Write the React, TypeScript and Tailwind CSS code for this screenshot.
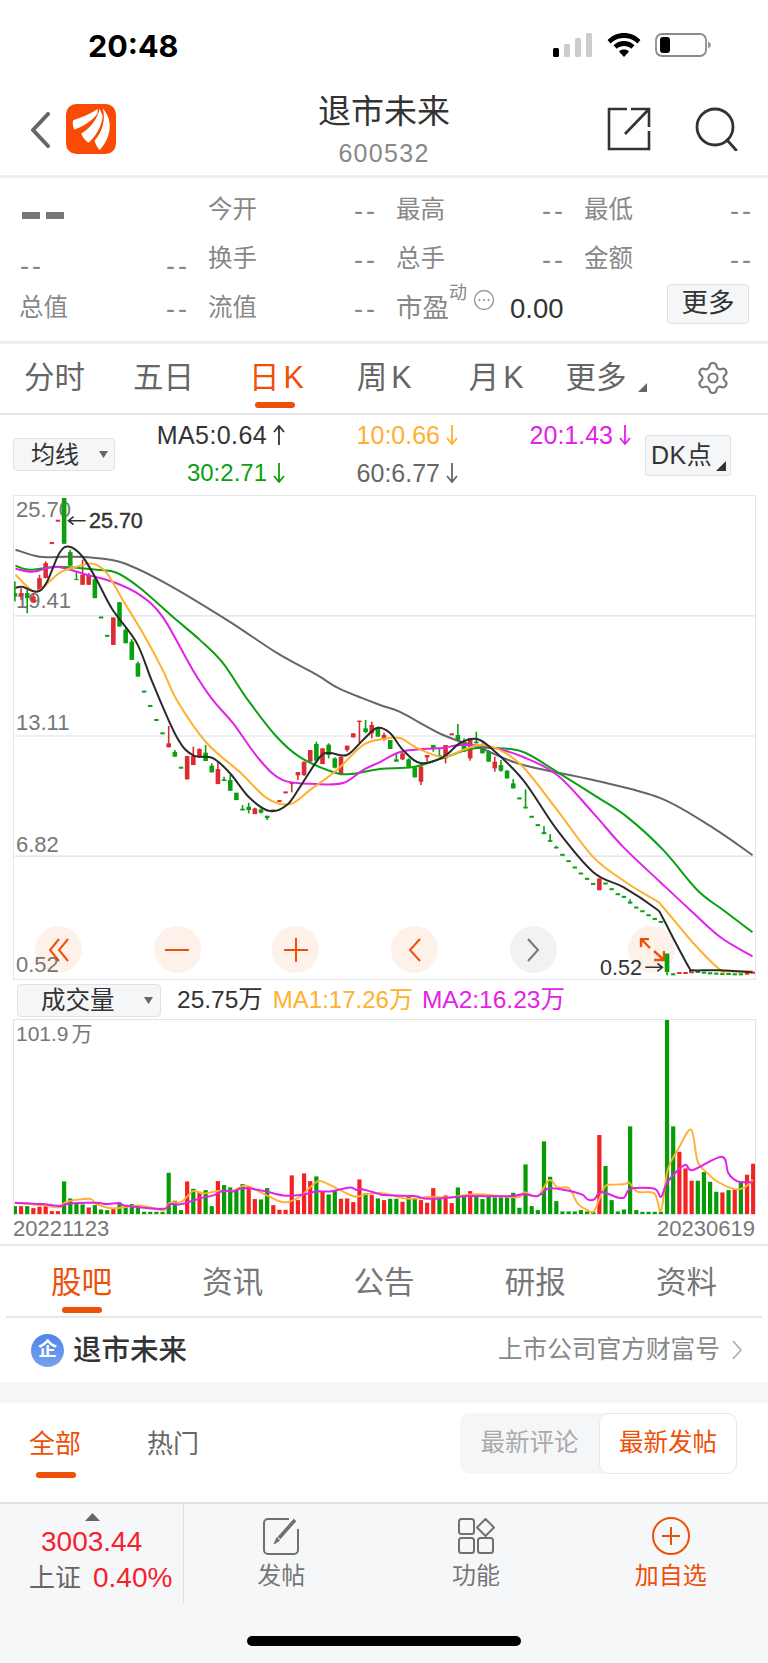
import React from "react";
import { Settings } from "lucide-react";

type P = [number, number];

function smooth(pts: P[]): string {
  let d = `M${pts[0][0]} ${pts[0][1]}`;
  for (let i = 0; i < pts.length - 1; i++) {
    const p0 = pts[i - 1] || pts[i];
    const p1 = pts[i];
    const p2 = pts[i + 1];
    const p3 = pts[i + 2] || p2;
    const c1x = p1[0] + (p2[0] - p0[0]) / 6;
    const c1y = p1[1] + (p2[1] - p0[1]) / 6;
    const c2x = p2[0] - (p3[0] - p1[0]) / 6;
    const c2y = p2[1] - (p3[1] - p1[1]) / 6;
    d += ` C${c1x.toFixed(1)} ${c1y.toFixed(1)} ${c2x.toFixed(1)} ${c2y.toFixed(1)} ${p2[0]} ${p2[1]}`;
  }
  return d;
}

const GREEN = "#0aa00f";
const RED = "#dc2c33";
const ORANGE = "#ffb02e";
const MAGENTA = "#e222e8";

const ma60: P[] = [[16,550],[40,557],[67,557],[93,558],[123,563],[167,584],[227,620],[277,653],[317,675],[340,689],[380,705],[400,712],[443,735],[480,748],[523,765],[593,780],[660,798],[713,828],[752,855]];
const ma30: P[] = [[16,566],[30,570],[60,567],[97,570],[117,573],[140,588],[173,617],[200,640],[223,663],[248,700],[277,737],[300,757],[333,772],[350,774],[380,769],[413,767],[443,758],[470,749],[493,748],[523,752],[557,772],[597,797],[627,817],[663,850],[697,890],[723,910],[752,932]];
const ma20: P[] = [[16,569],[33,572],[57,567],[87,575],[113,582],[140,595],[163,617],[193,670],[213,700],[233,723],[260,760],[283,780],[317,784],[343,783],[363,770],[380,762],[400,752],[423,749],[443,748],[460,745],[490,747],[523,757],[557,775],[593,813],[623,847],[660,882],[690,910],[720,937],[752,956]];
const ma10: P[] = [[16,575],[33,591],[43,588],[60,573],[77,567],[93,564],[107,573],[123,600],[143,633],[163,670],[177,700],[207,743],[240,772],[267,798],[290,804],[310,790],[337,770],[363,745],[383,739],[400,738],[417,748],[443,757],[463,750],[480,745],[500,750],[523,767],[557,810],[593,857],[627,883],[655,900],[662,906],[693,943],[720,970],[726,971],[752,971]];
const ma5: P[] = [[16,588],[23,587],[37,592],[47,583],[60,553],[70,547],[83,557],[97,580],[113,610],[137,643],[153,683],[177,737],[193,755],[213,758],[230,773],[250,798],[270,811],[287,805],[300,787],[320,757],[330,753],[347,755],[363,740],[377,728],[390,733],[403,750],[420,763],[443,757],[460,743],[477,739],[493,750],[523,780],[557,830],[593,872],[623,887],[655,908],[661,915],[675,942],[689,968],[692,970],[720,970],[752,972]];

// [index, colour, wick top, wick bottom, body top, body bottom] in zoom units
type C = [number, "g" | "r", number, number, number?, number?];
const candlesA: C[] = [
  [0,"g",485,545,520,530],[1,"r",505,540,520,530],[2,"g",510,580,520,535],[3,"r",520,548,530,548],[4,"r",465,510,475,510],[5,"r",425,475,430,475],
  [6,"r",370,370],[7,"r",303,303],[8,"g",235,372,235,372],[9,"g",390,438,397,438],[10,"g",455,480,478,481],[11,"r",420,495,465,495],[12,"r",460,495,465,495],
  [13,"g",470,535,478,535],[14,"g",593,593],[15,"g",648,648],[16,"r",593,675,593,675],[17,"g",547,620,547,620],[18,"g",625,670,630,670],[19,"g",658,720,665,720],
  [20,"g",725,770,730,770],[21,"g",815,815],
];
const candlesB: C[] = [
  [22,"g",18,18],[23,"g",60,60],[24,"g",100,100],[25,"r",78,142,130,142],[26,"g",150,170,156,170],[27,"g",203,203],[28,"r",168,238,168,238],[29,"r",140,195,168,195],
  [30,"r",145,172,147,172],[31,"g",135,183,158,183],[32,"g",190,217,197,217],[33,"r",185,252,207,252],[34,"g",230,243,238,243],[35,"g",225,272,240,272],[36,"g",278,300,278,300],
  [37,"g",315,330,326,331],[38,"g",308,340,320,330],[39,"r",323,342,325,342],[40,"g",325,340,328,338],[41,"g",347,360,347,354],[42,"r",331,331],[43,"r",303,303],[44,"r",277,277],
  [45,"r",248,277,248,252],[46,"r",216,240,216,226],[47,"r",185,228,185,225],[48,"r",150,185,150,185],[49,"g",125,185,132,182],[50,"r",145,192,145,192],[51,"g",130,175,134,165],
  [52,"g",172,205,175,203],[53,"r",170,225,170,222],[54,"r",137,155,137,150],[55,"r",100,112,100,112],[56,"r",62,130,62,66],[57,"g",60,100,85,96],[58,"r",65,115,75,100],
  [59,"g",80,110,82,110],[60,"r",98,122,105,120],[61,"g",120,147,120,147],[62,"g",160,185,178,185],[63,"r",155,180,160,178],[64,"g",175,200,178,200],[65,"g",200,232,202,232],
  [66,"r",198,255,200,245],[67,"r",165,185,165,172],[68,"g",135,155,135,145],[69,"g",145,170,165,170],[70,"r",135,190,135,175],[71,"r",103,103],[72,"g",72,125,105,120],
  [73,"g",115,155,125,155],[74,"r",115,182,115,175],[75,"g",95,130,125,130],[76,"g",130,160,135,160],[77,"g",150,185,155,185],[78,"r",170,215,185,205],[79,"g",180,215,195,212],
  [80,"g",210,235,212,235],[81,"g",237,265,250,265],[82,"g",295,295],[83,"g",268,325,320,325],[84,"g",350,350],[85,"g",375,375],[86,"g",378,402,396,402],[87,"g",402,425,420,425],
  [88,"g",437,444,440,445],[89,"g",464,464],[90,"g",483,483],[91,"g",502,502],[92,"g",520,520],[93,"g",536,536],[94,"g",551,551],[95,"r",535,570,535,570],[96,"g",550,550],
  [97,"g",567,567],[98,"g",582,582],[99,"g",590,590],[100,"g",597,610,604,610],[101,"g",622,622],[102,"g",633,633],[103,"g",645,645],[104,"g",656,656],[105,"g",665,665],
  [106,"g",760,825,760,815],[107,"g",822,822],[108,"r",818,818],[109,"r",818,818],[110,"r",816,816],[111,"g",815,815],[112,"g",817,817],[113,"g",819,819],[114,"g",820,820],
  [115,"g",821,821],[116,"g",821,821],[117,"g",822,822],[118,"g",822,822],[119,"r",820,820],[120,"r",817,817],
];

const volRaw: ["g" | "r", number][] = [
  ["g",678],["r",678],["g",678],["r",684],["r",680],["r",678],["r",693],["r",693],["g",604],["g",655],["g",670],["g",673],["r",682],["g",675],["g",688],["g",690],["r",685],["g",672],["g",680],["g",672],["g",678],
  ["g",695],["g",695],["g",695],["g",695],["g",578],["g",662],["g",690],["r",604],["g",626],["r",635],["g",630],["g",678],["r",603],["g",615],["g",622],["g",630],["g",612],["r",618],["r",657],["g",658],["g",624],
  ["r",675],["r",689],["r",689],["r",586],["r",660],["r",580],["r",603],["g",589],["r",633],["g",643],["g",630],["r",656],["r",655],["r",666],["r",598],["g",640],["r",645],["g",655],["r",660],
  ["g",656],["g",656],["r",665],["g",650],["g",655],["r",660],["r",668],["r",624],["g",656],["r",646],["r",669],["g",622],["g",650],["r",633],["g",650],["g",657],["g",648],["g",652],["g",652],["g",652],["g",638],
  ["g",683],["g",553],["g",678],["g",690],["g",484],["g",590],["g",663],["g",694],["g",694],["g",694],["g",690],["g",694],["g",694],["r",465],["g",558],["g",660],["g",694],["g",688],["g",439],["g",690],
  ["g",695],["g",695],["g",695],["g",695],["g",118],["g",439],["r",515],["r",565],["r",602],["g",602],["g",576],["g",605],["g",635],["r",637],["g",630],["r",628],["g",604],["r",584],["r",551],
];

const vz = (x: number, y: number): P => [+(x / 3).toFixed(1), +(980 + y / 3).toFixed(1)];
const vr = (x: number, y: number): P => [+(384 + x / 3).toFixed(1), +(980 + y / 3).toFixed(1)];
const volOrange: P[] = [
  ...([[46,668],[90,672],[130,676],[180,682],[200,665],[270,656],[290,672],[340,685],[420,676],[490,690],[510,668],[545,665],[580,633],[610,640],[660,632],[700,632],[735,616],[770,630],[810,650],[855,667],[900,650],[950,605],[980,610],[1040,640],[1070,650],[1100,642]] as P[]).map(([x, y]) => vz(x, y)),
  ...([[0,640],[60,655],[100,655],[140,650],[200,652],[240,645],[300,643],[400,652],[420,636],[460,648],[495,600],[520,622],[555,625],[580,670],[610,690],[630,692],[660,622],[680,614],[720,612],[735,608],[760,635],[810,640],[830,692],[850,570],[880,510],[920,449],[940,545],[970,580],[1000,605],[1050,627],[1080,622],[1105,600]] as P[]).map(([x, y]) => vr(x, y)),
];
const volMagenta: P[] = [
  ...([[46,668],[130,672],[180,678],[210,670],[290,668],[320,672],[360,669],[380,677],[490,686],[510,672],[545,672],[600,655],[640,646],[670,632],[700,634],[730,624],[790,632],[850,646],[900,645],[950,634],[990,634],[1050,622],[1070,630],[1080,626],[1140,642]] as P[]).map(([x, y]) => vz(x, y)),
  ...([[0,645],[90,648],[130,656],[200,652],[260,648],[380,648],[420,642],[460,648],[490,626],[520,626],[590,642],[610,658],[630,658],[650,636],[700,652],[720,652],[740,626],[810,626],[830,650],[850,605],[900,555],[925,570],[1012,530],[1032,580],[1060,604],[1105,606]] as P[]).map(([x, y]) => vr(x, y)),
];

const cx = (i: number) => 15.4 + i * 6.144;

function Candle({ c, base }: { c: C; base: number }) {
  const [i, col, wt, wb, bt, bb] = c;
  const fill = col === "g" ? GREEN : RED;
  const x = cx(i);
  const y1 = base + wt / 3;
  const y2 = base + wb / 3;
  if (bt === undefined || bb === undefined) {
    return <rect x={x - 2.2} y={y1 - 1} width={4.4} height={2} fill={fill} />;
  }
  return (
    <g>
      <rect x={x - 0.8} y={y1} width={1.6} height={y2 - y1} fill={fill} />
      <rect x={x - 2.3} y={base + bt / 3} width={4.6} height={(bb - bt) / 3} fill={fill} />
    </g>
  );
}

function MainChart() {
  return (
    <svg viewBox="14.5 496.5 740 482" className="absolute inset-0 w-full h-full">
      {[616, 736, 856].map((y) => (
        <line key={y} x1={13} x2={755} y1={y} y2={y} stroke="#e6eaf0" strokeWidth={1.6} />
      ))}
      {candlesA.map((c) => <Candle key={c[0]} c={c} base={420} />)}
      {candlesB.map((c) => <Candle key={c[0]} c={c} base={700} />)}
      <path d={smooth(ma60)} fill="none" stroke="#666666" strokeWidth={2} />
      <path d={smooth(ma30)} fill="none" stroke="#0aa00f" strokeWidth={2} />
      <path d={smooth(ma20)} fill="none" stroke={MAGENTA} strokeWidth={2} />
      <path d={smooth(ma10)} fill="none" stroke={ORANGE} strokeWidth={2} />
      <path d={smooth(ma5)} fill="none" stroke="#2b2b2b" strokeWidth={2} />
      <path d="M86 521H69M74 517L69 521L74 525" fill="none" stroke="#333" strokeWidth={1.6} />
      <path d="M645 967H662M657 963L662 967L657 971" fill="none" stroke="#333" strokeWidth={1.6} />
    </svg>
  );
}

function VolumeChart() {
  return (
    <svg viewBox="14.5 1020.5 740 193" className="absolute inset-0 w-full h-full">
      {volRaw.map(([col, top], i) => {
        const y = 980 + top / 3;
        return <rect key={i} x={cx(i) - 2.1} y={y} width={4.2} height={1214 - y} fill={col === "g" ? "#059c05" : "#f52222"} />;
      })}
      <path d={smooth(volOrange)} fill="none" stroke={ORANGE} strokeWidth={1.9} />
      <path d={smooth(volMagenta)} fill="none" stroke={MAGENTA} strokeWidth={2} />
    </svg>
  );
}

function Caret() {
  return (
    <svg width="9" height="7" viewBox="0 0 9 7"><path d="M0 0H9L4.5 7Z" fill="#666" /></svg>
  );
}

function Dashes() {
  return <span className="text-[#888] text-[27px] leading-[30px] tracking-[3px] -mr-[3px]">--</span>;
}

function Info({ label }: { label: string }) {
  return (
    <div className="w-[167px] flex items-center justify-between">
      <span className="text-[#888] text-[24.500px]">{label}</span>
      <Dashes />
    </div>
  );
}

function Circle({ gray, children }: { gray?: boolean; children: React.ReactNode }) {
  return (
    <div className={`w-[47px] h-[47px] rounded-full flex items-center justify-center ${gray ? "bg-[#f2f2f2]" : "bg-[#fdf1ea]"}`}>
      {children}
    </div>
  );
}

function Legend({ text, color, up, textClass }: { text: string; color: string; up?: boolean; textClass?: string }) {
  return (
    <span className="flex items-center justify-end gap-[6px]" style={{ color }}>
      <span className={textClass}>{text}</span>
      <svg width="12" height="20" viewBox="0 0 12 20" fill="none" stroke={color} strokeWidth="1.8">
        {up ? <path d="M6 20V1M1 7L6 1L11 7" /> : <path d="M6 0V19M1 13L6 19L11 13" />}
      </svg>
    </span>
  );
}

const ic = { fill: "none", stroke: "#ee5008", strokeWidth: 2 } as const;

export default function App() {
  return (
    <div className="w-[768px] h-[1663px] overflow-hidden bg-white flex flex-col text-[#333] [font-family:'Liberation_Sans','Noto_Sans_CJK_SC',sans-serif]">
      {/* status bar */}
      <div className="h-[90px] shrink-0 flex items-start justify-between pt-[27px] pl-[88px] pr-[57px]">
        <span className="text-[30.500px] leading-[38px] font-bold text-black [font-family:Inter,'Liberation_Sans',sans-serif]">20:48</span>
        <div className="flex items-center gap-[14px] pt-[6px]">
          <svg width="40" height="24" viewBox="0 0 40 24">
            <rect x="0" y="15" width="6" height="9" rx="1.5" fill="#000" />
            <rect x="11" y="11" width="6" height="13" rx="1.5" fill="#ccc" />
            <rect x="22" y="5" width="6" height="19" rx="1.5" fill="#ccc" />
            <rect x="33" y="0" width="6" height="24" rx="1.5" fill="#ccc" />
          </svg>
          <svg width="34" height="24" viewBox="0 0 34 24">
            <path d="M17 0C10.500 0 5 2.500 0.500 7L3.500 10.500C7.500 6.800 12 5 17 5S26.500 6.800 30.500 10.500L33.500 7C29 2.500 23.500 0 17 0Z" fill="#000" />
            <path d="M17 8C12.800 8 9.500 9.500 6.500 12.300L9.700 15.800C11.800 13.900 14.200 13 17 13S22.200 13.900 24.300 15.800L27.500 12.300C24.500 9.500 21.200 8 17 8Z" fill="#000" />
            <path d="M17 16.500C15 16.500 13.500 17.100 12 18.400L17 24L22 18.400C20.500 17.100 19 16.500 17 16.500Z" fill="#000" />
          </svg>
          <svg width="56" height="24" viewBox="0 0 56 24">
            <rect x="1" y="1" width="50" height="22" rx="6" fill="none" stroke="#8a8a8a" strokeWidth="1.8" />
            <rect x="5" y="4" width="10" height="16" rx="3" fill="#000" />
            <path d="M53 8.500C55 9.500 56 10.500 56 12S55 14.500 53 15.500Z" fill="#999" />
          </svg>
        </div>
      </div>

      {/* header */}
      <div className="h-[85px] shrink-0 grid grid-cols-[1fr_auto_1fr] border-b-[3px] border-[#eeeeee] box-content">
        <div className="flex items-start pl-[30px] pt-[14px] gap-[16px]">
          <svg width="20" height="36" viewBox="0 0 20 36" className="mt-[8px]">
            <path d="M18 2L3 18L18 34" fill="none" stroke="#666" strokeWidth="4" strokeLinecap="round" strokeLinejoin="round" />
          </svg>
          <svg width="50" height="50" viewBox="0 0 49 49">
            <rect width="49" height="49" rx="10" fill="#f94b06" />
            <path d="M31 5C24 10 15 13 7 16C6 19 7 22 8 25C17 22 26 16 31 9Z" fill="#fff" />
            <path d="M33 5C31 14 24 24 15 29C16 33 19 36 22 38C29 32 35 22 36 12C35 9 34 7 33 5Z" fill="#fff" />
            <path d="M36 4C39 15 36 27 28 36C29 40 31 43 33 45C40 38 45 26 42 15C41 11 38 7 36 4Z" fill="#fff" />
          </svg>
        </div>
        <div className="flex flex-col items-center pt-[4px]">
          <span className="text-[33px] leading-[36px] text-[#333]">退市未来</span>
          <span className="text-[25px] leading-[30px] mt-[8px] tracking-[1.300px] text-[#888]">600532</span>
        </div>
        <div className="flex justify-end items-start pt-[17px] pr-[30px] gap-[44px]">
          <svg width="44" height="44" viewBox="0 0 44 44" fill="none" stroke="#333" strokeWidth="2.6">
            <path d="M20 2H2V42H42V24" />
            <path d="M42 2L18 27M24 2H42V20" />
          </svg>
          <svg width="43" height="44" viewBox="0 0 43 44" fill="none" stroke="#333" strokeWidth="2.8">
            <circle cx="20" cy="20" r="18" />
            <path d="M32 33L41 43" strokeLinecap="round" />
          </svg>
        </div>
      </div>

      {/* quote info */}
      <div className="h-[155px] shrink-0 border-b-[3px] border-[#eeeeee] box-content pt-[8px] pl-[19px]">
        <div className="grid grid-cols-[189px_188px_188px_188px] auto-rows-[49px]">
          <div className="flex items-center">
            <span className="flex gap-[6px] pl-[3px] pt-[10px]">
              <span className="w-[18px] h-[7px] bg-[#777]" />
              <span className="w-[18px] h-[7px] bg-[#777]" />
            </span>
          </div>
          <Info label="今开" />
          <Info label="最高" />
          <Info label="最低" />
          <div className="w-[168px] flex items-center justify-between pt-[12px] pl-[1px]">
            <Dashes />
            <Dashes />
          </div>
          <Info label="换手" />
          <Info label="总手" />
          <Info label="金额" />
          <div className="w-[168px] flex items-center justify-between">
            <span className="text-[#888] text-[24.500px]">总值</span>
            <Dashes />
          </div>
          <Info label="流值" />
          <div className="flex items-center">
            <span className="text-[#888] text-[26.500px]">市盈</span>
            <div className="flex items-start self-start -mt-[3px]">
              <span className="text-[#888] text-[18px] leading-[24px]">动</span>
              <svg width="22" height="22" viewBox="0 0 22 22" className="ml-[6px] mt-[8px]" fill="none">
                <circle cx="11" cy="11" r="9.500" stroke="#999" strokeWidth="1.4" />
                <circle cx="6.500" cy="11" r="1" fill="#888" />
                <circle cx="11" cy="11" r="1" fill="#888" />
                <circle cx="15.500" cy="11" r="1" fill="#888" />
              </svg>
            </div>
            <span className="text-[27.500px] text-[#333] ml-[15px]">0.00</span>
          </div>
          <div className="flex items-start">
            <div className="ml-[83px] w-[82px] h-[40px] bg-[#f5f6f8] border border-[#dfe2e6] rounded-[4px] flex items-center justify-center text-[26.500px] text-[#333]">更多</div>
          </div>
        </div>
      </div>

      {/* period tabs */}
      <div className="h-[56px] shrink-0 flex items-start pt-[13px] border-b-[2px] border-[#e5e7ea] box-content text-[30.500px] leading-[40px] text-[#666]">
        <span className="ml-[24px]">分时</span>
        <span className="ml-[48px]">五日</span>
        <span className="ml-[55px] relative text-[#ee5008] flex">
          <span>日</span>
          <span className="ml-[4px]">K</span>
          <span className="absolute left-[6px] top-[45px] w-[40px] h-[6px] rounded-full bg-[#ee5008]" />
        </span>
        <span className="ml-[53px] flex"><span>周</span><span className="ml-[4px]">K</span></span>
        <span className="ml-[57px] flex"><span>月</span><span className="ml-[4px]">K</span></span>
        <span className="ml-[42px]">更多</span>
        <svg width="9" height="9" viewBox="0 0 9 9" className="ml-[11px] mt-[26px]"><path d="M9 0V9H0Z" fill="#666" /></svg>
        <Settings size={36} strokeWidth={1.4} color="#777" className="ml-[48px] mt-[3px]" />
      </div>

      {/* MA legend */}
      <div className="h-[80px] shrink-0 flex items-start">
        <div className="ml-[13px] mt-[23px] w-[102px] h-[33px] bg-[#f5f6f8] border border-[#dfe2e6] rounded-[4px] flex items-center pl-[17px] gap-[20px]">
          <span className="text-[24px] leading-[30px] text-[#333]">均线</span>
          <Caret />
        </div>
        <div className="w-[516px] mt-[1px] grid grid-cols-[170px_173px_173px] auto-rows-[38px] text-[25px] leading-[38px] text-right">
          <Legend text="MA5:0.64" color="#333333" up textClass="tracking-[0.4px]" />
          <Legend text="10:0.66" color="#ffb02e" />
          <Legend text="20:1.43" color="#e222e8" />
          <Legend text="30:2.71" color="#0aa00f" textClass="text-[24px]" />
          <Legend text="60:6.77" color="#666666" />
        </div>
        <div className="ml-[14px] mt-[20px] w-[86px] h-[41px] bg-[#f5f6f8] border border-[#dfe2e6] rounded-[3px] relative flex items-center pl-[5px] text-[25px] tracking-[0.5px] text-[#333]">
          DK点
          <svg width="10" height="10" viewBox="0 0 10 10" className="absolute right-[4px] bottom-[4px]"><path d="M10 0V10H0Z" fill="#333" /></svg>
        </div>
      </div>

      {/* main chart */}
      <div className="relative ml-[13px] w-[743px] h-[485px] shrink-0 border-[1.5px] border-[#e3e6ea] box-border">
        <div className="absolute left-[21px] top-[430px] flex gap-[71.700px]">
          <Circle>
            <svg width="22" height="26" viewBox="0 0 22 26" {...ic}><path d="M11 2L2 13L11 24M20 2L11 13L20 24" /></svg>
          </Circle>
          <Circle><svg width="24" height="4" viewBox="0 0 24 4" {...ic}><path d="M0 2H24" /></svg></Circle>
          <Circle><svg width="24" height="24" viewBox="0 0 24 24" {...ic}><path d="M0 12H24M12 0V24" /></svg></Circle>
          <Circle><svg width="14" height="24" viewBox="0 0 14 24" {...ic}><path d="M12 1L2 12L12 23" /></svg></Circle>
          <Circle gray><svg width="14" height="24" viewBox="0 0 14 24" fill="none" stroke="#777" strokeWidth="2"><path d="M2 1L12 12L2 23" /></svg></Circle>
          <Circle>
            <svg width="26" height="24" viewBox="0 0 26 24" {...ic} strokeWidth="2.4"><path d="M2 9V1H10M2 1L11 10M15 22H25V13M25 22L15 13" /></svg>
          </Circle>
        </div>
        <span className="absolute left-[2px] top-[1px] text-[22px] leading-[26px] text-[#777]">25.70</span>
        <span className="absolute left-[2px] top-[92px] text-[22px] leading-[26px] text-[#777]">19.41</span>
        <span className="absolute left-[2px] top-[214px] text-[22px] leading-[26px] text-[#777]">13.11</span>
        <span className="absolute left-[2px] top-[336px] text-[22px] leading-[26px] text-[#777]">6.82</span>
        <span className="absolute left-[2px] top-[456px] text-[22px] leading-[26px] text-[#777]">0.52</span>
        <MainChart />
        <span className="absolute left-[75px] top-[12px] text-[21.500px] leading-[26px] text-[#333] [-webkit-text-stroke:0.4px_#333]">25.70</span>
        <span className="absolute left-[586px] top-[459px] text-[21.500px] leading-[26px] text-[#333]">0.52</span>
      </div>

      {/* volume legend */}
      <div className="h-[39px] shrink-0 flex items-start pt-[4px] pl-[17px]">
        <div className="w-[144px] h-[33px] bg-[#f5f6f8] border border-[#dfe2e6] rounded-[4px] flex items-center pl-[23px] gap-[29px]">
          <span className="text-[24.500px] leading-[30px] text-[#333] whitespace-nowrap">成交量</span>
          <Caret />
        </div>
        <span className="ml-[16px] text-[24.500px] leading-[32px] text-[#333]">25.75万</span>
        <span className="ml-[10px] text-[24px] leading-[32px] text-[#ffb02e]">MA1:17.26万</span>
        <span className="ml-[9px] text-[24.500px] leading-[32px] text-[#e222e8]">MA2:16.23万</span>
      </div>

      {/* volume chart */}
      <div className="relative ml-[13px] w-[743px] h-[196px] shrink-0 border-[1.5px] border-[#e3e3e3] box-border">
        <span className="absolute left-[2px] top-[1px] flex text-[21px] leading-[26px] text-[#777]">
          <span>101.9</span>
          <span className="ml-[3px] text-[21px]">万</span>
        </span>
        <VolumeChart />
      </div>
      <div className="h-[29px] shrink-0 flex justify-between px-[13px] text-[22px] leading-[28px] text-[#777]">
        <span>20221123</span>
        <span>20230619</span>
      </div>

      {/* news tabs */}
      <div className="h-[72px] shrink-0 border-t-[2px] border-[#e8e8e8] box-border">
        <div className="grid grid-cols-5 px-[6px] pt-[16px] text-[30.500px] leading-[40px] text-[#777] text-center">
          <span className="relative text-[#ee5008]">
            股吧
            <span className="absolute left-1/2 -translate-x-1/2 top-[45px] w-[40px] h-[6px] rounded-full bg-[#ee5008]" />
          </span>
          <span>资讯</span>
          <span>公告</span>
          <span>研报</span>
          <span>资料</span>
        </div>
      </div>
      <div className="mx-[6px] h-[66px] shrink-0 border-t-[2px] border-[#e8e8e8] box-border flex items-center pl-[25px] pr-[20px]">
        <span className="w-[33px] h-[33px] rounded-full bg-gradient-to-b from-[#4f84e6] to-[#77a3ee] text-white text-[19px] font-bold flex items-center justify-center">企</span>
        <span className="ml-[9px] text-[28.500px] font-medium text-[#333]">退市未来</span>
        <span className="ml-auto text-[24.700px] text-[#888]">上市公司官方财富号</span>
        <svg width="10" height="20" viewBox="0 0 10 20" className="ml-[12px]" fill="none" stroke="#aaa" strokeWidth="1.6"><path d="M1 1L9 10L1 19" /></svg>
      </div>
      <div className="h-[21px] shrink-0 bg-[#f5f6f8]" />

      {/* comment tabs */}
      <div className="h-[99px] shrink-0 flex items-start">
        <span className="ml-[29px] mt-[21px] relative text-[26px] leading-[40px] text-[#ee5008]">
          全部
          <span className="absolute left-[7px] top-[48px] w-[40px] h-[6px] rounded-full bg-[#ee5008]" />
        </span>
        <span className="ml-[66px] mt-[21px] text-[26px] leading-[40px] text-[#666]">热门</span>
        <div className="ml-auto mr-[31px] mt-[10px] w-[277px] h-[61px] rounded-[10px] bg-[#f5f6f8] flex items-stretch">
          <span className="w-[139px] flex items-center justify-center text-[24.500px] text-[#aaa]">最新评论</span>
          <span className="w-[138px] rounded-[10px] bg-white border border-[#e8e8e8] flex items-center justify-center text-[24.500px] text-[#ee5008]">最新发帖</span>
        </div>
      </div>

      {/* bottom bar */}
      <div className="flex-1 bg-[#f6f7f9] border-t-[2px] border-[#e2e2e2] flex flex-col">
        <div className="h-[99px] flex items-stretch">
          <div className="w-[184px] border-r border-[#dddddd] flex flex-col pt-[9px] pl-[29px]">
            <svg width="15" height="8" viewBox="0 0 15 8" className="ml-[56px]"><path d="M7.500 0L15 8H0Z" fill="#666" /></svg>
            <span className="mt-[4px] ml-[12px] text-[28px] leading-[34px] text-[#f5222d]">3003.44</span>
            <div className="mt-[1px] flex items-center gap-[12px] leading-[36px] whitespace-nowrap">
              <span className="text-[#666] text-[26px]">上证</span>
              <span className="text-[#f5222d] text-[28px]">0.40%</span>
            </div>
          </div>
          <div className="flex-1 grid grid-cols-3 text-center pt-[13px]">
            <div className="flex flex-col items-center">
              <svg width="38" height="38" viewBox="0 0 38 38" fill="none" stroke="#707070" strokeWidth="2">
                <path d="M27 2H6A4 4 0 0 0 2 6V33A4 4 0 0 0 6 37H32A4 4 0 0 0 36 33V12" />
                <path d="M17 21L33 3" strokeWidth="3.600" />
                <path d="M12 27L17.500 23.500L15 20.500Z" fill="#707070" strokeWidth="1" />
              </svg>
              <span className="mt-[3px] text-[24px] leading-[36px] text-[#777]">发帖</span>
            </div>
            <div className="flex flex-col items-center">
              <svg width="38" height="38" viewBox="0 0 38 38" fill="none" stroke="#707070" strokeWidth="2">
                <rect x="2" y="2" width="15" height="15" rx="2.500" />
                <rect x="2" y="21" width="15" height="15" rx="2.500" />
                <rect x="21" y="21" width="15" height="15" rx="2.500" />
                <path d="M28.500 2L37 10.500L28.500 19L20 10.500Z" strokeLinejoin="round" />
              </svg>
              <span className="mt-[3px] text-[24px] leading-[36px] text-[#777]">功能</span>
            </div>
            <div className="flex flex-col items-center">
              <svg width="38" height="38" viewBox="0 0 38 38" fill="none" stroke="#ee5008" strokeWidth="2">
                <circle cx="19" cy="19" r="18" />
                <path d="M10 19H28M19 10V28" />
              </svg>
              <span className="mt-[3px] text-[24px] leading-[36px] text-[#ee5008]">加自选</span>
            </div>
          </div>
        </div>
        <div className="flex justify-center pt-[33px]">
          <div className="w-[274px] h-[10px] rounded-full bg-black" />
        </div>
      </div>
    </div>
  );
}
